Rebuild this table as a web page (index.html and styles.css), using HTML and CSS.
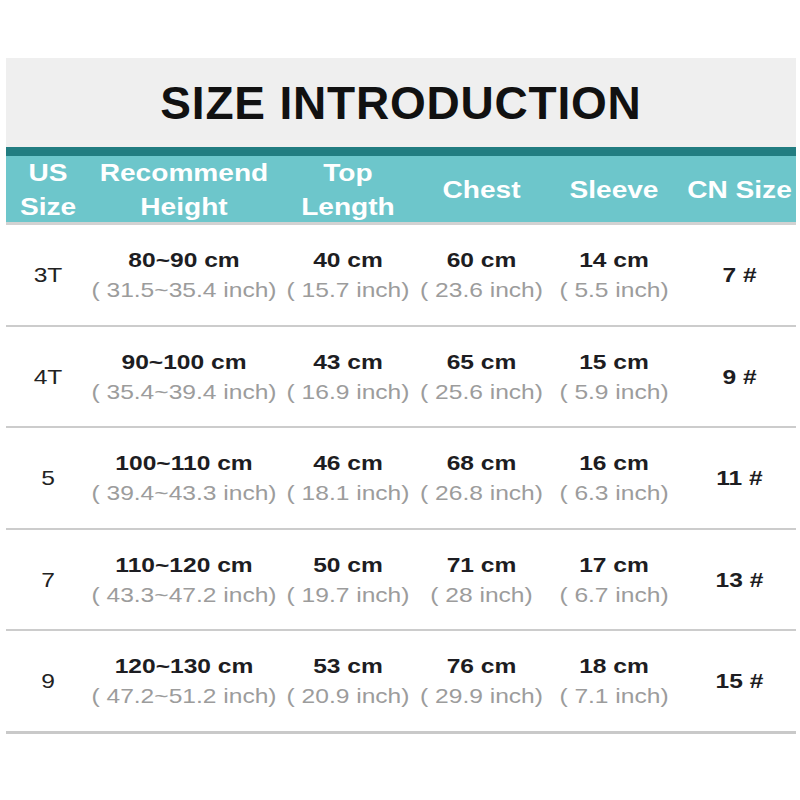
FILE: index.html
```html
<!DOCTYPE html>
<html>
<head>
<meta charset="utf-8">
<link rel="stylesheet" href="styles.css">
</head>
<body>
<div class="chart">
  <div class="title">SIZE INTRODUCTION</div>
  <div class="strip"></div>
  <div class="grid head">
    <div class="cell">US<br>Size</div>
    <div class="cell">Recommend<br>Height</div>
    <div class="cell">Top<br>Length</div>
    <div class="cell">Chest</div>
    <div class="cell">Sleeve</div>
    <div class="cell">CN Size</div>
  </div>
  <div class="grid row">
    <div class="cell us">3T</div>
    <div class="cell"><b>80~90 cm</b><span>( 31.5~35.4 inch)</span></div>
    <div class="cell"><b>40 cm</b><span>( 15.7 inch)</span></div>
    <div class="cell"><b>60 cm</b><span>( 23.6 inch)</span></div>
    <div class="cell"><b>14 cm</b><span>( 5.5 inch)</span></div>
    <div class="cell cn">7 #</div>
  </div>
  <div class="grid row">
    <div class="cell us">4T</div>
    <div class="cell"><b>90~100 cm</b><span>( 35.4~39.4 inch)</span></div>
    <div class="cell"><b>43 cm</b><span>( 16.9 inch)</span></div>
    <div class="cell"><b>65 cm</b><span>( 25.6 inch)</span></div>
    <div class="cell"><b>15 cm</b><span>( 5.9 inch)</span></div>
    <div class="cell cn">9 #</div>
  </div>
  <div class="grid row">
    <div class="cell us">5</div>
    <div class="cell"><b>100~110 cm</b><span>( 39.4~43.3 inch)</span></div>
    <div class="cell"><b>46 cm</b><span>( 18.1 inch)</span></div>
    <div class="cell"><b>68 cm</b><span>( 26.8 inch)</span></div>
    <div class="cell"><b>16 cm</b><span>( 6.3 inch)</span></div>
    <div class="cell cn">11 #</div>
  </div>
  <div class="grid row">
    <div class="cell us">7</div>
    <div class="cell"><b>110~120 cm</b><span>( 43.3~47.2 inch)</span></div>
    <div class="cell"><b>50 cm</b><span>( 19.7 inch)</span></div>
    <div class="cell"><b>71 cm</b><span>( 28 inch)</span></div>
    <div class="cell"><b>17 cm</b><span>( 6.7 inch)</span></div>
    <div class="cell cn">13 #</div>
  </div>
  <div class="grid row last">
    <div class="cell us">9</div>
    <div class="cell"><b>120~130 cm</b><span>( 47.2~51.2 inch)</span></div>
    <div class="cell"><b>53 cm</b><span>( 20.9 inch)</span></div>
    <div class="cell"><b>76 cm</b><span>( 29.9 inch)</span></div>
    <div class="cell"><b>18 cm</b><span>( 7.1 inch)</span></div>
    <div class="cell cn">15 #</div>
  </div>
</div>
</body>
</html>
```

FILE: styles.css
```css
html, body {
  margin: 0;
  padding: 0;
  background: #ffffff;
}

body {
  font-family: "Liberation Sans", Arial, sans-serif;
}

.chart {
  width: 790px;
  margin: 58px 0 0 6px;
}

.title {
  height: 89px;
  background: #efefef;
  display: flex;
  align-items: center;
  justify-content: center;
  font-size: 46px;
  font-weight: bold;
  letter-spacing: 0.8px;
  color: #111111;
  padding-top: 1px;
  box-sizing: border-box;
}

.strip {
  height: 9px;
  background: #227d81;
}

.grid {
  display: grid;
  grid-template-columns: 84px 188px 140px 127px 138px 113px;
}

.cell {
  display: flex;
  flex-direction: column;
  align-items: center;
  justify-content: center;
  text-align: center;
  white-space: nowrap;
  transform: scaleX(1.17);
}

.head {
  height: 66px;
  background: #6dc6cb;
  border-bottom: 3px solid #d2d2d2;
  color: #ffffff;
  font-size: 24px;
  font-weight: bold;
  line-height: 34px;
}

.head .cell {
  display: block;
  align-self: center;
}

.row {
  height: 99.5px;
  border-bottom: 2px solid #cccccc;
  font-size: 21px;
  line-height: 30px;
}

.row.last {
  border-bottom: 3px solid #c9c9c9;
}

.row .cell {
  padding-top: 1px;
}

.row b {
  display: block;
  font-weight: bold;
  color: #1d1d22;
}

.row span {
  display: block;
  color: #9c9c9c;
}

.us {
  color: #222222;
}

.cn {
  font-weight: bold;
  color: #1d1d22;
}
```
